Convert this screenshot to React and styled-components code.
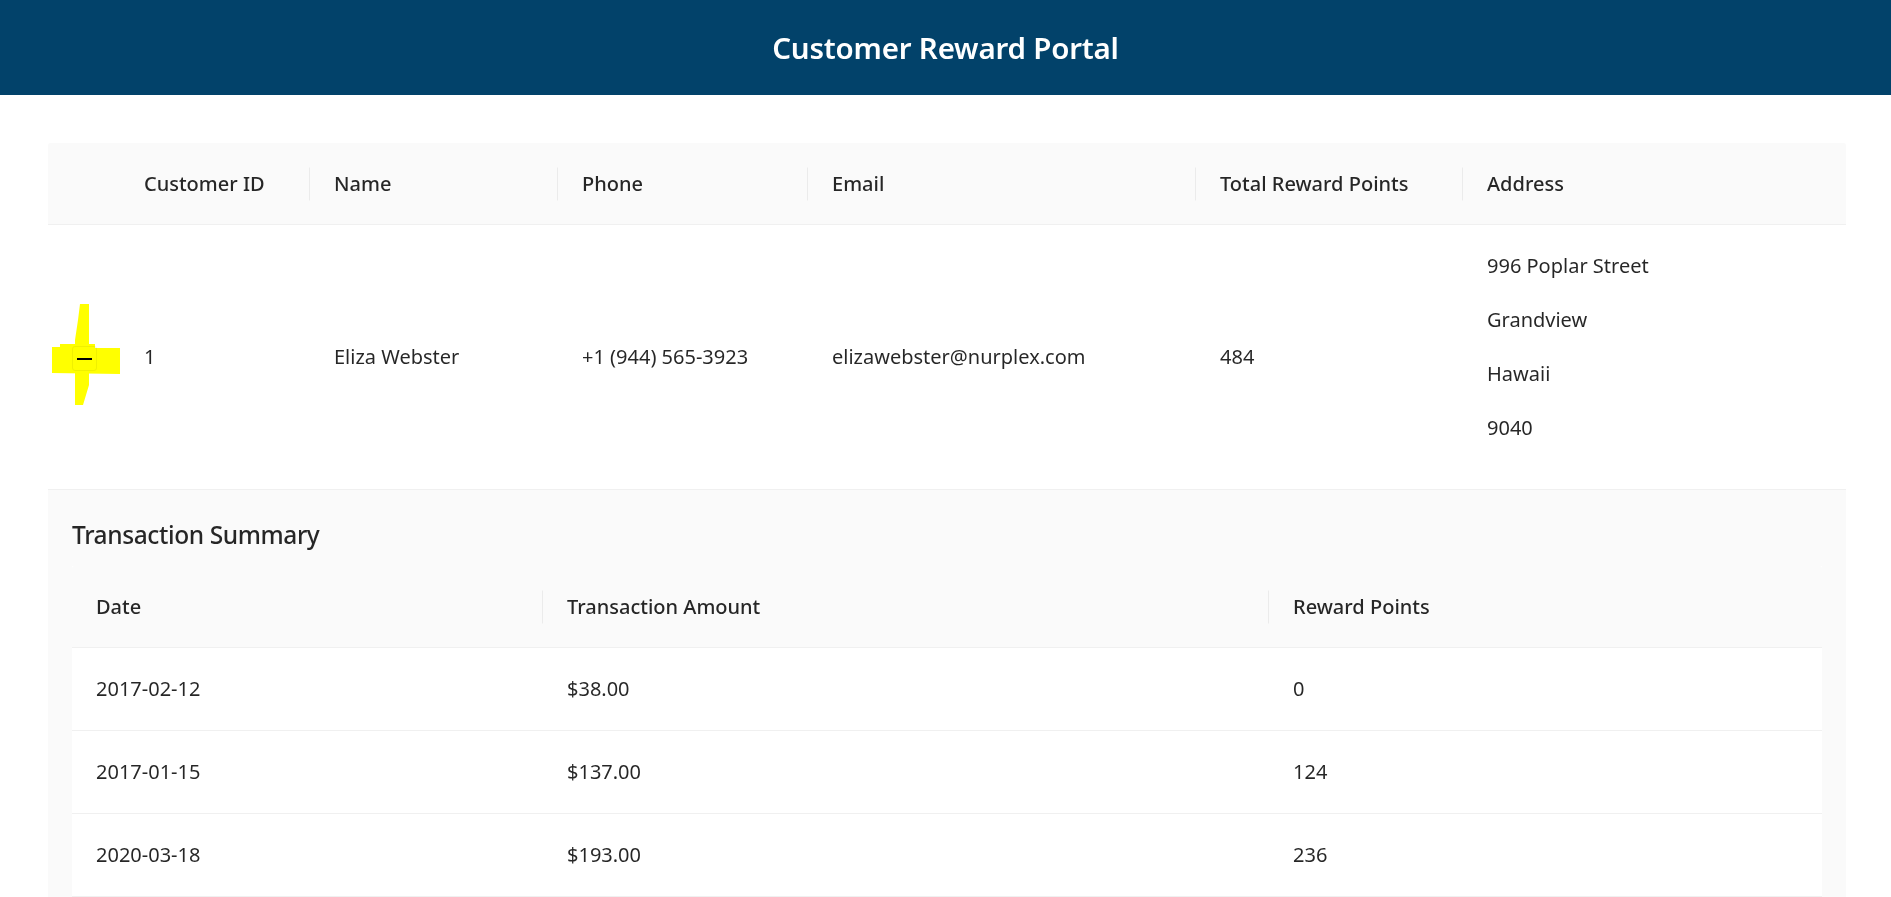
import React from 'react';
import styled, { createGlobalStyle } from 'styled-components';

const GlobalStyle = createGlobalStyle`
    body {
        margin: 0;
        background: #fff;
        font-family: "Noto Sans", "Open Sans", "Liberation Sans", sans-serif;
        color: rgba(0, 0, 0, 0.85);
    }
`;

const Page = styled.div`
    position: relative;
    min-height: 100vh;
`;

const Header = styled.header`
    height: 95px;
    background: #02426a;
    display: flex;
    align-items: center;
    justify-content: center;
`;

const Title = styled.h1`
    margin: 0;
    color: #fff;
    font-size: 29.5px;
    font-weight: 600;
    letter-spacing: -0.2px;
`;

const Content = styled.main`
    width: 1798px;
    margin: 48px 0 0 48px;
`;

const Table = styled.table`
    width: 100%;
    table-layout: fixed;
    border-collapse: separate;
    border-spacing: 0;
    font-size: 20px;
    line-height: 34px;
    background: #fff;
`;

const Th = styled.th`
    position: relative;
    text-align: left;
    font-weight: 500;
    line-height: 33px;
    background: #fafafa;
    padding: 24px;
    border-bottom: 1px solid #f0f0f0;
    &:first-child { border-top-left-radius: 3px; }
    &:last-child { border-top-right-radius: 3px; }

    ${props => props.divider && `
        &::before {
            content: '';
            position: absolute;
            right: 0;
            top: 50%;
            transform: translateY(-50%);
            width: 1px;
            height: 33px;
            background: rgba(0, 0, 0, 0.06);
        }
    `}
`;

const Td = styled.td`
    padding: 24px;
    vertical-align: middle;
    border-bottom: 1px solid #f0f0f0;
    background: #fff;
`;

const ExpandCell = styled(Td)`
    padding: 0;
    text-align: center;
`;

const ExpandButton = styled.button`
    position: relative;
    display: inline-block;
    width: 25px;
    height: 25px;
    padding: 0;
    border: 1px solid #f0f0f0;
    border-radius: 3px;
    background: #fff;
    vertical-align: middle;
    cursor: pointer;
`;

const MinusBar = styled.span`
    position: absolute;
    left: 4px;
    right: 4px;
    top: 11px;
    height: 2px;
    background: #000;
`;

const AddressLine = styled.p`
    margin: 0 0 21px;
    line-height: 33px;
`;

const ExpandedCell = styled.td`
    background: #fafafa;
    padding: 24px;
    border-bottom: 1px solid #f0f0f0;
`;

const SummaryTitle = styled.h4`
    margin: 0 0 10px;
    font-size: 24.5px;
    line-height: 42px;
    font-weight: 500;
    letter-spacing: -0.4px;
    color: rgba(0, 0, 0, 0.85);
`;

const Highlight = styled.svg`
    position: absolute;
    left: 50px;
    top: 300px;
    mix-blend-mode: multiply;
    pointer-events: none;
`;

const customer = {
    id: 1,
    name: 'Eliza Webster',
    phone: '+1 (944) 565-3923',
    email: 'elizawebster@nurplex.com',
    points: 484,
    address: ['996 Poplar Street', 'Grandview', 'Hawaii', '9040'],
    transactions: [
        { date: '2017-02-12', amount: '$38.00', points: 0 },
        { date: '2017-01-15', amount: '$137.00', points: 124 },
        { date: '2020-03-18', amount: '$193.00', points: 236 },
    ],
};

const columns = [
    { title: 'Customer ID', width: 190 },
    { title: 'Name', width: 248 },
    { title: 'Phone', width: 250 },
    { title: 'Email', width: 388 },
    { title: 'Total Reward Points', width: 267 },
    { title: 'Address' },
];

const txColumns = [
    { title: 'Date', width: 471 },
    { title: 'Transaction Amount', width: 726 },
    { title: 'Reward Points' },
];

function TransactionSummary({ transactions }) {
    return (
        <>
            <SummaryTitle>Transaction Summary</SummaryTitle>
            <Table>
                <colgroup>
                    {txColumns.map(c => <col key={c.title} style={c.width ? { width: c.width } : undefined} />)}
                </colgroup>
                <thead>
                    <tr>
                        {txColumns.map((c, i) => (
                            <Th key={c.title} divider={i < txColumns.length - 1}>{c.title}</Th>
                        ))}
                    </tr>
                </thead>
                <tbody>
                    {transactions.map(t => (
                        <tr key={t.date}>
                            <Td>{t.date}</Td>
                            <Td>{t.amount}</Td>
                            <Td>{t.points}</Td>
                        </tr>
                    ))}
                </tbody>
            </Table>
        </>
    );
}

export default function App() {
    const c = customer;
    return (
        <Page>
            <GlobalStyle />
            <Header>
                <Title>Customer Reward Portal</Title>
            </Header>
            <Content>
                <Table>
                    <colgroup>
                        <col style={{ width: 72 }} />
                        {columns.map(col => <col key={col.title} style={col.width ? { width: col.width } : undefined} />)}
                    </colgroup>
                    <thead>
                        <tr>
                            <Th divider={false} />
                            {columns.map((col, i) => (
                                <Th key={col.title} divider={i < columns.length - 1}>{col.title}</Th>
                            ))}
                        </tr>
                    </thead>
                    <tbody>
                        <tr>
                            <ExpandCell>
                                <ExpandButton aria-label="Collapse row"><MinusBar /></ExpandButton>
                            </ExpandCell>
                            <Td>{c.id}</Td>
                            <Td>{c.name}</Td>
                            <Td>{c.phone}</Td>
                            <Td>{c.email}</Td>
                            <Td>{c.points}</Td>
                            <Td>
                                {c.address.map(line => <AddressLine key={line}>{line}</AddressLine>)}
                            </Td>
                        </tr>
                        <tr>
                            <ExpandedCell colSpan={7}>
                                <TransactionSummary transactions={c.transactions} />
                            </ExpandedCell>
                        </tr>
                    </tbody>
                </Table>
            </Content>
            <Highlight width="72" height="108" viewBox="0 0 72 108">
                <path d="M30 4 L39 4 L39 85 L33 105 L25 105 L25 40 L28 20 Z" fill="#ffff00" />
                <path d="M2 47 L10 47 L10 44 L45 44 L45 48 L70 48 L70 74 L2 73 Z" fill="#ffff00" />
            </Highlight>
        </Page>
    );
}
